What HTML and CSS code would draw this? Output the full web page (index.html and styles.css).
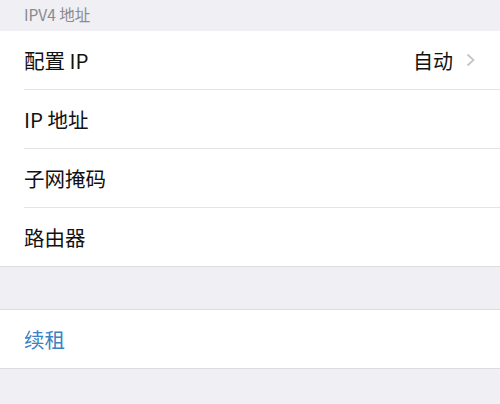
FILE: index.html
```html
<!DOCTYPE html>
<html lang="zh">
<head>
<meta charset="utf-8">
<link rel="stylesheet" href="styles.css">
</head>
<body>
<div class="header">IPV4 地址</div>
<div class="group">
  <div class="row"><span class="label">配置 IP</span><span class="value">自动<svg class="chev" width="9" height="14" viewBox="0 0 9 14"><path d="M1.5 1.5 L7.5 7 L1.5 12.5" fill="none" stroke="#c4c4c8" stroke-width="1.7"/></svg></span></div>
  <div class="row"><span class="label">IP 地址</span></div>
  <div class="row"><span class="label">子网掩码</span></div>
  <div class="row"><span class="label">路由器</span></div>
</div>
<div class="spacer"></div>
<div class="group top">
  <div class="row"><span class="label link">续租</span></div>
</div>
</body>
</html>
```
FILE: styles.css
```css
html, body {
  margin: 0;
  padding: 0;
  background: #efeff4;
  font-family: "Noto Sans CJK SC", "Noto Sans", sans-serif;
  width: 500px;
  height: 404px;
  overflow: hidden;
}
.header {
  height: 31px;
  line-height: 28px;
  padding-left: 24px;
  font-size: 15.5px;
  color: #8a8a8f;
}
.group {
  background: #fff;
  border-bottom: 1px solid #dcdce0;
}
.group.top {
  border-top: 1px solid #dcdce0;
}
.row {
  height: 58px;
  margin-left: 24px;
  padding-right: 25px;
  display: flex;
  align-items: center;
  justify-content: space-between;
  border-bottom: 1px solid #e4e4e7;
}
.row:last-child {
  border-bottom: none;
}
.label {
  font-size: 20.5px;
  color: #111;
}
.value {
  font-size: 20px;
  color: #111;
  display: flex;
  align-items: center;
  gap: 13px;
}
.link {
  color: #3a82c4;
}
.spacer {
  height: 42px;
}
```
